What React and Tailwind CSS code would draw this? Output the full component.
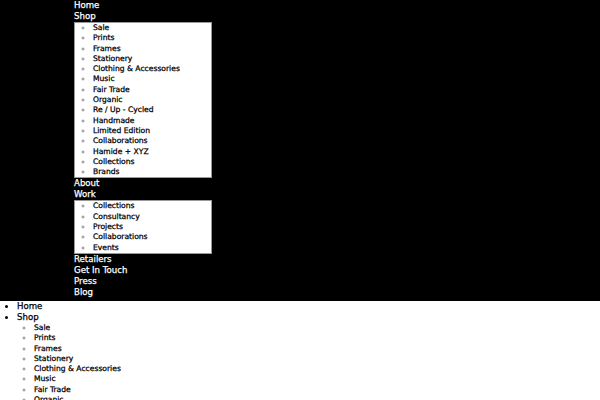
import React from "react";

const shop = ["Sale","Prints","Frames","Stationery","Clothing & Accessories","Music","Fair Trade","Organic","Re / Up - Cycled","Handmade","Limited Edition","Collaborations","Hamide + XYZ","Collections","Brands"];
const work = ["Collections","Consultancy","Projects","Collaborations","Events"];
const nav = [
  { label: "Home" },
  { label: "Shop", sub: shop },
  { label: "About" },
  { label: "Work", sub: work },
  { label: "Retailers" },
  { label: "Get In Touch" },
  { label: "Press" },
  { label: "Blog" },
];

export default function App() {
  return (
    <div className="w-[600px] h-[400px] overflow-hidden bg-white [-webkit-text-stroke:0.25px]" style={{ fontFamily: '"DejaVu Sans", sans-serif' }}>
      <div className="bg-black pl-[74px] pb-[3px]">
        <ul className="list-none">
          {nav.map((n) => (
            <li key={n.label}>
              <div className="text-white text-[8.6px] leading-[11px]">{n.label}</div>
              {n.sub && (
                <ul className="w-[138px] bg-white border border-[#999] list-[circle] pl-[18px]">
                  {n.sub.map((s) => (
                    <li key={s} className="text-black text-[7.6px] leading-[10.3px] marker:text-[#888]">{s}</li>
                  ))}
                </ul>
              )}
            </li>
          ))}
        </ul>
      </div>
      <ul className="list-disc pl-[17px]">
        {nav.map((n) => (
          <li key={n.label} className="text-black text-[8.6px] leading-[11px]">
            {n.label}
            {n.sub && (
              <ul className="list-[circle] pl-[17px]">
                {n.sub.map((s) => (
                  <li key={s} className="text-[7.6px] leading-[10.3px] marker:text-[#888]">{s}</li>
                ))}
              </ul>
            )}
          </li>
        ))}
      </ul>
    </div>
  );
}
